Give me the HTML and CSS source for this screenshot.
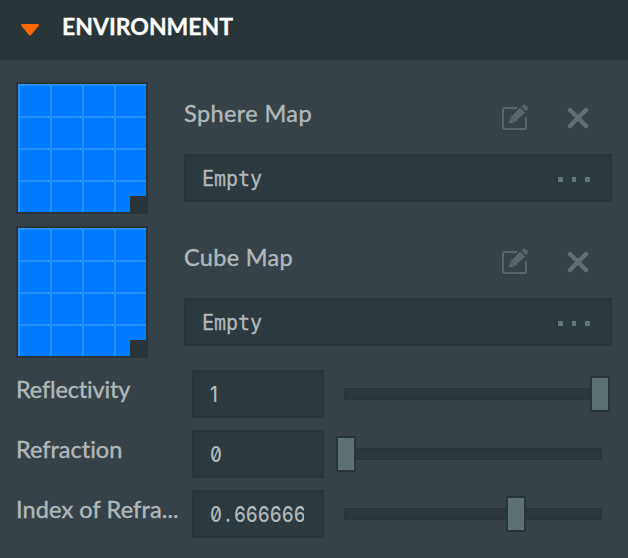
FILE: index.html
```html
<!DOCTYPE html>
<html lang="en">
<head>
<meta charset="utf-8">
<title>Environment</title>
<link rel="stylesheet" href="styles.css">
</head>
<body>
<svg class="defs" aria-hidden="true">
  <symbol id="edit" viewBox="0 0 30 30">
    <path d="M17 5H4.2Q3 5 3 6.2V24.8Q3 26 4.2 26H24.8Q26 26 26 24.8V14" fill="none" stroke="currentColor" stroke-width="2"/>
    <path d="M8.5 20.7L10.6 14.2L20.2 4.6L25 9.4L15.2 19Z" fill="currentColor"/>
    <path d="M21.3 3.6L23 2.1Q24.6 .9 26.2 2.4L27.4 3.6Q28.8 5.2 27.4 6.8L26 8.3Z" fill="currentColor"/>
    <path d="M10.4 15L14.6 19.2" stroke="#364247" stroke-width=".8"/>
  </symbol>
  <symbol id="close" viewBox="0 0 20 20">
    <path d="M2.7 2.7L17.3 17.3M17.3 2.7L2.7 17.3" fill="none" stroke="currentColor" stroke-width="4" stroke-linecap="round"/>
  </symbol>
</svg>
<header class="header">
  <svg class="arrow" viewBox="0 0 20 14"><path d="M2 2H18L10 11.5Z" fill="#ff6600" stroke="#ff6600" stroke-width="2" stroke-linejoin="round"/></svg>
  <h1 class="title">ENVIRONMENT</h1>
</header>
<main class="content">
  <section class="map">
    <div class="thumb"><i class="corner"></i></div>
    <div class="map-body">
      <div class="map-head">
        <span class="label sphere">Sphere Map</span>
        <svg class="edit"><use href="#edit"/></svg>
        <svg class="close"><use href="#close"/></svg>
      </div>
      <div class="field picker"><span class="mono">Empty</span><span class="dots"><i></i><i></i><i></i></span></div>
    </div>
  </section>
  <section class="map">
    <div class="thumb"><i class="corner"></i></div>
    <div class="map-body">
      <div class="map-head">
        <span class="label cube">Cube Map</span>
        <svg class="edit"><use href="#edit"/></svg>
        <svg class="close"><use href="#close"/></svg>
      </div>
      <div class="field picker"><span class="mono">Empty</span><span class="dots"><i></i><i></i><i></i></span></div>
    </div>
  </section>
  <section class="rows">
    <div class="row">
      <span class="label reflectivity">Reflectivity</span>
      <div class="field number"><div class="clip"><span class="digits single">1</span></div></div>
      <div class="track"><i class="knob" style="left:100%"></i></div>
    </div>
    <div class="row">
      <span class="label refraction">Refraction</span>
      <div class="field number"><div class="clip"><span class="digits">0</span></div></div>
      <div class="track"><i class="knob" style="left:0%"></i></div>
    </div>
    <div class="row">
      <span class="label index">Index of Refra...</span>
      <div class="field number"><div class="clip"><span class="digits">0<span class="point">.</span>666666</span></div></div>
      <div class="track"><i class="knob" style="left:66.9%"></i></div>
    </div>
  </section>
</main>
</body>
</html>
```
FILE: styles.css
```css
* { box-sizing: border-box; }
body {
  margin: 0;
  height: 558px;
  overflow: hidden;
  background: #364247;
  color: #b1b8ba;
  font-family: Lato, sans-serif;
}
.defs { display: none; }
.header {
  display: flex;
  height: 60px;
  padding-left: 20px;
  background: #293538;
}
.arrow { width: 20px; height: 14px; margin: 23px 22px 0 0; }
.title {
  margin: 11px 0 0;
  color: #fff;
  font-size: 23px;
  font-weight: 700;
  line-height: 30px;
  -webkit-text-stroke: .3px #fff;
}
.content { padding: 22px 16px 0; }
.map { display: flex; gap: 36px; height: 132px; margin-bottom: 12px; }
.thumb {
  display: flex;
  flex: none;
  width: 132px;
  height: 132px;
  border: 2px solid #293538;
  background:
    linear-gradient(#2491ff 2px, transparent 2px) 0 0 / 32px 32px,
    linear-gradient(90deg, #2491ff 2px, transparent 2px) 0 0 / 32px 32px,
    #007bff;
  background-origin: padding-box;
}
.corner { width: 18px; height: 18px; margin: auto -2px -2px auto; background: #293538; }
.map-body { flex: 1; }
.map-head { display: flex; height: 72px; padding-right: 23px; }
.label {
  font-size: 23.5px;
  line-height: 30px;
  white-space: nowrap;
  font-variant-ligatures: none;
  -webkit-text-stroke: .4px currentColor;
}
.sphere { letter-spacing: .4px; }
.cube { letter-spacing: .3px; }
.reflectivity { letter-spacing: -.15px; }
.refraction { letter-spacing: 0; }
.index { letter-spacing: .12px; }
.map-head .label { margin-top: 16px; }
.edit { width: 30px; height: 30px; margin: 21px 0 0 auto; color: #596569; }
.close { width: 22px; height: 22px; margin: 25px 0 0 37px; color: #636e71; }
.field {
  display: flex;
  align-items: center;
  height: 48px;
  border: 2px solid #293538;
  background: #2c393e;
}
.picker { padding: 0 20px 0 16px; justify-content: space-between; }
.mono {
  margin-top: 2px;
  font: 22px/30px "DejaVu Sans Mono", monospace;
  transform: scaleX(.907);
  transform-origin: left;
  -webkit-text-stroke: .3px currentColor;
}
.digits {
  display: flex;
  font: 500 22px/30px Inter, sans-serif;
  font-feature-settings: "zero" 1, "tnum" 1;
  transform: scaleX(.84);
  transform-origin: left;
}
.single { font-feature-settings: normal; }
.point { width: 14.2px; text-align: center; }
.dots { display: flex; gap: 9.1px; margin-top: 3px; }
.dots i { width: 4.6px; height: 5px; background: #617478; }
.row {
  display: grid;
  grid-template-columns: 176px 132px 258px;
  height: 48px;
  margin-bottom: 12px;
}
.row .label { margin-top: 4px; }
.number { padding-left: 16px; }
.clip { display: flex; width: 94px; overflow: hidden; }
.track {
  position: relative;
  width: 258px;
  height: 12px;
  margin: 18px 0 0 20px;
  border: 2px solid #293538;
  background: #2c383d;
}
.knob {
  position: absolute;
  top: -14px;
  width: 20px;
  height: 36px;
  margin-left: -10px;
  border: 2px solid #293538;
  background: #5d7175;
}
```
